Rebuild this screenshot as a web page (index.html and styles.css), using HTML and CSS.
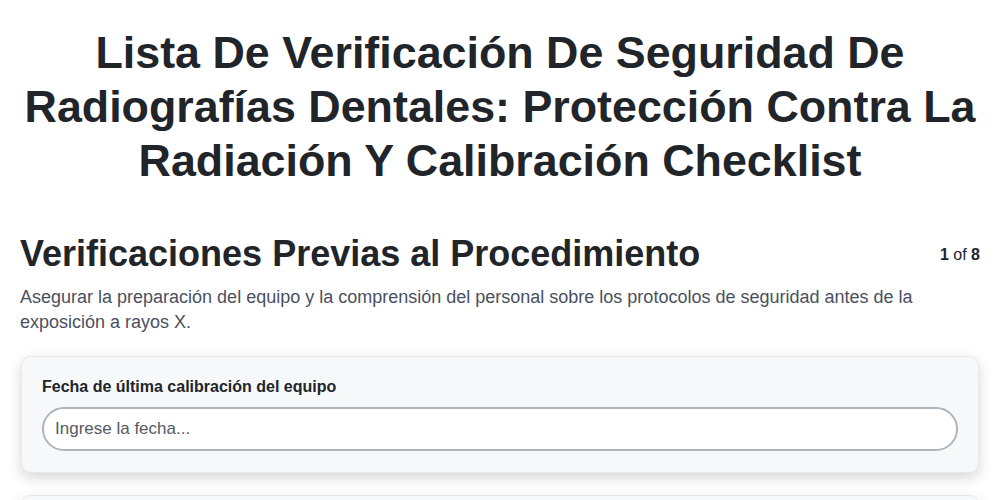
FILE: index.html
```html
<!DOCTYPE html>
<html lang="es">
<head>
<meta charset="utf-8">
<title>Checklist</title>
<link rel="stylesheet" href="styles.css">
</head>
<body>
<main class="page">
  <h1 class="title">Lista De Verificación De Seguridad De Radiografías Dentales: Protección Contra La Radiación Y Calibración Checklist</h1>
  <section class="section">
    <div class="section-head">
      <h2 class="section-title">Verificaciones Previas al Procedimiento</h2>
      <div class="counter"><b>1</b> of <b>8</b></div>
    </div>
    <p class="section-desc">Asegurar la preparación del equipo y la comprensión del personal sobre los protocolos de seguridad antes de la exposición a rayos X.</p>
    <div class="card">
      <label class="field-label" for="f1">Fecha de última calibración del equipo</label>
      <input class="field-input" id="f1" type="text" placeholder="Ingrese la fecha...">
    </div>
    <div class="card">
      <label class="field-label" for="f2">Nombre del técnico responsable</label>
      <input class="field-input" id="f2" type="text" placeholder="Ingrese el nombre...">
    </div>
  </section>
</main>
</body>
</html>
```
FILE: styles.css
```css
html, body {
  margin: 0;
  padding: 0;
  background: #ffffff;
}
body {
  font-family: "Liberation Sans", Arial, sans-serif;
  color: #212529;
}
.page {
  padding: 25px 20px 0 20px;
}
.title {
  margin: 0;
  font-size: 44.8px;
  line-height: 54px;
  font-weight: 700;
  text-align: center;
  color: #212529;
}
.section {
  margin-top: 44px;
}
.section-head {
  display: flex;
  justify-content: space-between;
  align-items: center;
}
.section-title {
  margin: 0;
  font-size: 36px;
  line-height: 46px;
  font-weight: 700;
  color: #212529;
}
.counter {
  font-size: 16px;
  padding-top: 1px;
  color: #212529;
}
.section-desc {
  margin: 8px 0 0;
  font-size: 18px;
  line-height: 25px;
  color: #4a5060;
}
.card {
  margin: 21px 1px 0;
  padding: 20px 20px 21px;
  background: #f7f8fa;
  border: 1px solid #e6e8eb;
  border-radius: 10px;
  box-shadow: 0 5px 14px rgba(0, 0, 0, 0.16);
}
.card + .card {
  margin-top: 22px;
}
.field-label {
  display: block;
  font-size: 16px;
  line-height: 20px;
  font-weight: 700;
  color: #212529;
  margin-bottom: 10px;
}
.field-input {
  display: block;
  box-sizing: border-box;
  width: 100%;
  height: 44px;
  padding: 0 11px;
  border: 2px solid #adb5bd;
  border-radius: 22px;
  background: #ffffff;
  font-family: "Liberation Sans", Arial, sans-serif;
  font-size: 17px;
  color: #212529;
  outline: none;
}
.field-input::placeholder {
  color: #555a60;
}
```
